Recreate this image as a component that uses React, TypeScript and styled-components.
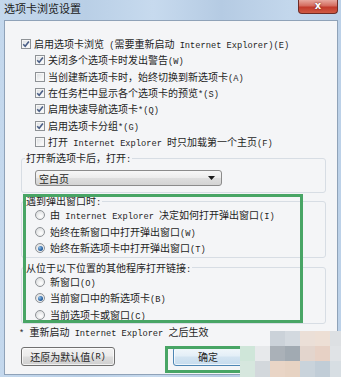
import styled, { createGlobalStyle } from "styled-components";

const GlobalStyle = createGlobalStyle`
  html, body { margin: 0; padding: 0; background: #ffffff; }
  body { font-family: "Noto Sans CJK SC", "Noto Sans", sans-serif; color: #1e1e1e; }
`;

// latin runs are drawn in a half-width mono face, like SimSun in the original
const Mixed = ({ text }: { text: string }) => (
  <>
    {text.split(/([\x20-\x7e]+)/).map((part, i) =>
      part === "" ? null : /^[\x20-\x7e]+$/.test(part) ? (
        <Latin key={i}>{part}</Latin>
      ) : (
        <span key={i}>{part}</span>
      )
    )}
  </>
);

const checks: { label: string; checked: boolean; indent: boolean }[] = [
  { label: "启用选项卡浏览 (需要重新启动 Internet Explorer)(E)", checked: true, indent: false },
  { label: "关闭多个选项卡时发出警告(W)", checked: true, indent: true },
  { label: "当创建新选项卡时，始终切换到新选项卡(A)", checked: false, indent: true },
  { label: "在任务栏中显示各个选项卡的预览*(S)", checked: true, indent: true },
  { label: "启用快速导航选项卡*(Q)", checked: true, indent: true },
  { label: "启用选项卡分组*(G)", checked: true, indent: true },
  { label: "打开 Internet Explorer 时只加载第一个主页(F)", checked: false, indent: true },
];

const popups = [
  { label: "由 Internet Explorer 决定如何打开弹出窗口(I)", on: false },
  { label: "始终在新窗口中打开弹出窗口(W)", on: false },
  { label: "始终在新选项卡中打开弹出窗口(T)", on: true },
];

const links = [
  { label: "新窗口(O)", on: false },
  { label: "当前窗口中的新选项卡(B)", on: true },
  { label: "当前选项卡或窗口(C)", on: false },
];

const mosaic: (string | null)[][] = [
  [null, null, "#cbd2d9", "#d3d9df", "#ebdfd7", "#eddfd5", "#dde0e3"],
  ["#cfe6d9", "#e7e9eb", "#aab1b8", "#a1aab2", "#e3d5cd", "#e7d1c5", "#e0e3e6"],
  ["#d6e7de", "#d3d8dc", "#e9d5c6", "#e7d3c3", "#c9d3db", "#c1cdd7", "#d7dee3"],
];

const CheckBox = ({ checked }: { checked: boolean }) => (
  <Box>
    {checked && (
      <svg width="8" height="8" viewBox="0 0 8 8">
        <path d="M1.2 4.2 L3.2 6.2 L6.9 1.4" fill="none" stroke="#4a5e86" strokeWidth="1.6" />
      </svg>
    )}
  </Box>
);

const App = () => {
  return (
    <>
      <GlobalStyle />
      <Window>
        <TitleBar>
          <Title>选项卡浏览设置</Title>
          <CloseButton>x</CloseButton>
        </TitleBar>
        <Client>
          {checks.map((c) => (
            <CheckRow key={c.label} $indent={c.indent}>
              <CheckBox checked={c.checked} />
              <Label>
                <Mixed text={c.label} />
              </Label>
            </CheckRow>
          ))}

          <Group $gap={2} $bottom={6}>
            <Legend>
              <Mixed text="打开新选项卡后，打开:" />
            </Legend>
            <Select>
              <span>空白页</span>
              <svg width="7" height="4" viewBox="0 0 7 4">
                <path d="M0 0 H7 L3.5 4 Z" fill="#1a1a1a" />
              </svg>
            </Select>
          </Group>

          <Group $gap={2}>
            <Legend>
              <Mixed text="遇到弹出窗口时:" />
            </Legend>
            {popups.map((r) => (
              <RadioRow key={r.label}>
                <Radio $on={r.on} />
                <Label>
                  <Mixed text={r.label} />
                </Label>
              </RadioRow>
            ))}
          </Group>

          <Group $gap={4}>
            <Legend>
              <Mixed text="从位于以下位置的其他程序打开链接:" />
            </Legend>
            {links.map((r) => (
              <RadioRow key={r.label}>
                <Radio $on={r.on} />
                <Label>
                  <Mixed text={r.label} />
                </Label>
              </RadioRow>
            ))}
          </Group>

          <Note>
            <Mixed text="* 重新启动 Internet Explorer 之后生效" />
          </Note>

          <ButtonRow>
            <Button $w={94}>
              <Mixed text="还原为默认值(R)" />
            </Button>
            <Button $w={70} $primary>
              确定
            </Button>
          </ButtonRow>
        </Client>

        <Highlight style={{ left: 23, top: 194, width: 280, height: 129 }} />
        <Highlight style={{ left: 165, top: 346, width: 84, height: 27 }} />

        <Mosaic>
          {mosaic.flat().map((c, i) => (
            <Cell key={i} $c={c} />
          ))}
        </Mosaic>
      </Window>
    </>
  );
};
export default App;

const Window = styled.div`
  position: relative;
  width: 341px;
  height: 377px;
  box-sizing: border-box;
  padding: 0 3px 2px 4px;
  display: flex;
  flex-direction: column;
  overflow: hidden;
  background: linear-gradient(
    90deg,
    #c4d8ed 0%,
    #b9cfe6 25%,
    #c7daee 45%,
    #b5cbe3 65%,
    #c3d7ec 85%,
    #bcd1e8 100%
  );
`;

const TitleBar = styled.div`
  height: 20px;
  flex: none;
  display: flex;
  justify-content: space-between;
  align-items: flex-start;
`;

const Title = styled.div`
  font-size: 11px;
  line-height: 16px;
  color: #1b1b1b;
`;

const CloseButton = styled.div`
  width: 40px;
  height: 14px;
  box-sizing: border-box;
  border: 1px solid #6e2b25;
  border-top: none;
  border-radius: 0 0 4px 4px;
  background: linear-gradient(180deg, #e7a89e 0%, #d46b5e 45%, #c23a2b 55%, #cf5a44 100%);
  color: #ffffff;
  font-family: "DejaVu Sans", sans-serif;
  font-weight: bold;
  font-size: 10px;
  line-height: 12px;
  text-align: center;
  text-shadow: 0 0 2px #5a1a14;
`;

const Client = styled.div`
  flex: 1;
  box-sizing: border-box;
  border: 1px solid #8fa2b8;
  background: #f4f5f7;
  padding: 15px 11px 0 16px;
  display: flex;
  flex-direction: column;
`;

const Label = styled.span`
  font-size: 10px;
  line-height: 12px;
  white-space: nowrap;
`;

const Latin = styled.span`
  font-family: "Liberation Mono", monospace;
  font-size: 8.7px;
  line-height: 0;
  white-space: pre;
`;

const CheckRow = styled.div<{ $indent: boolean }>`
  height: 16.3px;
  flex: none;
  display: flex;
  align-items: center;
  gap: 3px;
  margin-left: ${(p) => (p.$indent ? 14 : 0)}px;
`;

const Box = styled.span`
  width: 10px;
  height: 10px;
  box-sizing: border-box;
  flex: none;
  border: 1px solid #8e9296;
  background: linear-gradient(135deg, #d9dcdf 0%, #f2f3f4 60%, #ffffff 100%);
  box-shadow: inset 0 0 0 1px #f6f6f6;
  display: inline-flex;
  align-items: center;
  justify-content: center;
`;

const Group = styled.fieldset<{ $gap: number; $bottom?: number }>`
  flex: none;
  margin: ${(p) => p.$gap}px 0 0;
  padding: 0 8px ${(p) => p.$bottom ?? 0}px 3px;
  border: 1px solid #d7dde4;
  border-radius: 3px;
  min-width: 0;
`;

const Legend = styled.legend`
  display: block;
  height: 12px;
  padding: 0 1px;
  font-size: 10px;
  line-height: 12px;
  white-space: nowrap;
`;

const Select = styled.div`
  margin: 6px 0 0 10px;
  width: 187px;
  height: 16px;
  box-sizing: border-box;
  border: 1px solid #8b8b8b;
  border-radius: 3px;
  background: linear-gradient(180deg, #f7f7f7 0%, #ececec 48%, #dedede 52%, #d4d4d4 100%);
  padding: 0 6px 0 3px;
  display: flex;
  align-items: center;
  justify-content: space-between;
  font-size: 10px;
`;

const RadioRow = styled.div`
  height: 16.5px;
  margin-left: 10px;
  display: flex;
  align-items: center;
  gap: 5px;
`;

const Radio = styled.span<{ $on: boolean }>`
  width: 10px;
  height: 10px;
  box-sizing: border-box;
  flex: none;
  border-radius: 50%;
  border: 1px solid #8e9296;
  background: radial-gradient(circle at 60% 65%, #ffffff 0%, #e9eaeb 50%, #cfd2d5 100%);
  display: inline-flex;
  align-items: center;
  justify-content: center;
  &::after {
    content: "";
    display: ${(p) => (p.$on ? "block" : "none")};
    width: 5px;
    height: 5px;
    border-radius: 50%;
    background: radial-gradient(circle at 35% 35%, #8fc0ea 0%, #2f68a6 55%, #1b3f6e 100%);
  }
`;

const Note = styled.div`
  flex: none;
  height: 14px;
  margin: 1px 0 0 -2px;
  font-size: 10px;
  line-height: 14px;
`;

const ButtonRow = styled.div`
  margin-top: 8px;
  display: flex;
  gap: 58px;
`;

const Button = styled.div<{ $w: number; $primary?: boolean }>`
  width: ${(p) => p.$w}px;
  height: 19px;
  box-sizing: border-box;
  border: 1px solid ${(p) => (p.$primary ? "#4d86b4" : "#707070")};
  border-radius: 3px;
  background: ${(p) =>
    p.$primary
      ? "linear-gradient(180deg, #f1f7fb 0%, #e3eef7 48%, #d3e4f1 52%, #c6dcee 100%)"
      : "linear-gradient(180deg, #f2f2f2 0%, #ebebeb 48%, #dddddd 52%, #cfcfcf 100%)"};
  box-shadow: inset 0 0 0 1px rgba(255, 255, 255, 0.7);
  display: flex;
  align-items: center;
  justify-content: center;
  font-size: 10px;
  line-height: 12px;
  white-space: nowrap;
`;

const Highlight = styled.div`
  position: absolute;
  box-sizing: border-box;
  border: 3px solid #48a565;
  pointer-events: none;
`;

const Mosaic = styled.div`
  position: absolute;
  left: 240px;
  top: 331px;
  display: grid;
  grid-template-columns: repeat(7, 15px);
  grid-template-rows: 15px 15px 16px;
`;

const Cell = styled.div<{ $c: string | null }>`
  background: ${(p) => p.$c ?? "transparent"};
`;
